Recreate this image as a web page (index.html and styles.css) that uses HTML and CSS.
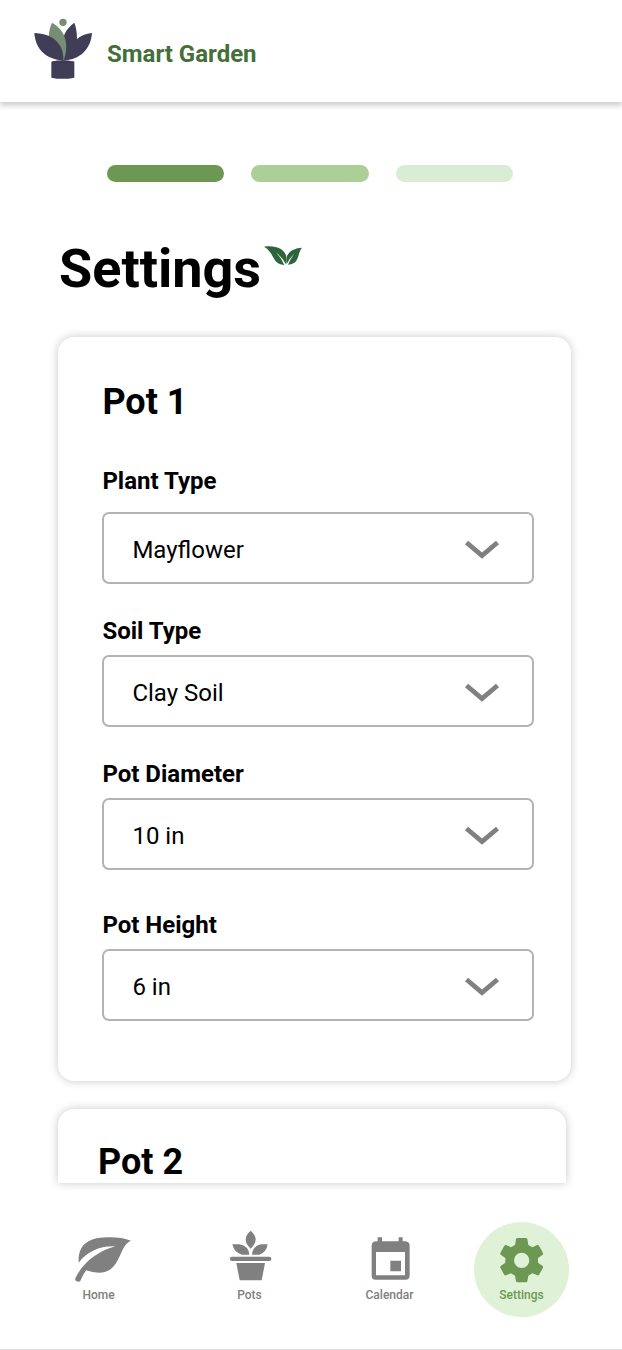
FILE: index.html
```html
<!DOCTYPE html>
<html lang="en">
<head>
<meta charset="utf-8">
<title>Smart Garden</title>
<link rel="stylesheet" href="styles.css">
</head>
<body>
<div class="app">
  <header class="header">
    <svg class="logo" viewBox="0 0 198 225" aria-hidden="true">
      <path class="logo-dark" d="M133 38C106 58 97 80 99 104V152C150 149 182 119 186 69Q158 72 141 87Q141 58 133 38Z"/>
      <path class="logo-green" d="M66 38C106 60 119 102 101 152L70 100L56 82Q57 56 66 38Z"/>
      <path class="logo-dark" d="M13 69C65 71 102 98 100 152C48 148 17 119 13 69Z"/>
      <circle class="logo-green" cx="99" cy="37" r="11"/>
      <path class="logo-dark" d="M64 155Q98 147 133 155V203Q98 210 64 203Z"/>
      <path class="logo-rim" d="M66 155Q98 162 131 155" />
    </svg>
    <span class="brand">Smart Garden</span>
  </header>

  <main class="main">
    <div class="steps"><i class="step step-done"></i><i class="step step-current"></i><i class="step step-next"></i></div>
    <div class="title-row">
      <h1 class="title">Settings</h1>
      <svg class="sprout" viewBox="0 0 114 60" aria-hidden="true">
        <path d="M0 2C36-4 68 10 67 38Q67 47 65 54Q55 34 37 20Q52 36 61 57C22 54 33 20 0 2Z"/>
        <path d="M114 5C83 7 65 23 67 45L68 55Q76 37 91 23Q79 39 72 56C108 55 99 22 114 5Z"/>
      </svg>
    </div>

    <div class="pots">
      <section class="card">
        <h2 class="card-title">Pot 1</h2>
        <div class="field field-first">
          <span class="label">Plant Type</span>
          <div class="select"><span>Mayflower</span><svg class="chevron" viewBox="0 0 34 20"><path d="M1.5 2.5L17 15.5L32.5 2.5"/></svg></div>
        </div>
        <div class="field">
          <span class="label">Soil Type</span>
          <div class="select"><span>Clay Soil</span><svg class="chevron" viewBox="0 0 34 20"><path d="M1.5 2.5L17 15.5L32.5 2.5"/></svg></div>
        </div>
        <div class="field">
          <span class="label">Pot Diameter</span>
          <div class="select"><span>10 in</span><svg class="chevron" viewBox="0 0 34 20"><path d="M1.5 2.5L17 15.5L32.5 2.5"/></svg></div>
        </div>
        <div class="field field-last">
          <span class="label">Pot Height</span>
          <div class="select"><span>6 in</span><svg class="chevron" viewBox="0 0 34 20"><path d="M1.5 2.5L17 15.5L32.5 2.5"/></svg></div>
        </div>
      </section>
      <section class="card card-cut"><h2 class="card-title">Pot 2</h2></section>
    </div>
  </main>

  <nav class="nav">
    <a class="tab tab-home">
      <svg class="tab-icon" viewBox="-12 0 168 144"><path d="M168 17C129 33 139 113 72 113Q52 113 34 106Q26 115 16 138Q12 142 5 139Q-1 136 1 130C25 79 71 48 121 34C76 32 37 49 11 83C9 39 28 8 98 7Q139 6 168 17Z"/></svg>
      <span>Home</span>
    </a>
    <a class="tab tab-pots">
      <svg class="tab-icon" viewBox="-2 0 168 144"><path d="M84-13Q114 13 84 41Q54 13 84-13ZM29 28H50Q78 33 80 59H58Q34 53 29 28ZM135 28H114Q90 33 88 59H110Q131 53 135 28Z"/><rect x="22" y="65" width="124" height="13" rx="6"/><path d="M41 84H127L117 136H51Z"/></svg>
      <span>Pots</span>
    </a>
    <a class="tab tab-calendar">
      <svg class="tab-icon" viewBox="-2 0 168 144"><path fill-rule="evenodd" d="M45 7H58V19H108V7H120V19H128Q141 20 141 32V123Q140 134 129 134H39Q27 134 27 123V32Q27 20 39 19H45ZM40 51V121H127V51ZM83 77H115V109H83Z"/></svg>
      <span>Calendar</span>
    </a>
    <a class="tab tab-settings">
      <svg class="tab-icon" viewBox="2 -1 168 144"><path fill-rule="evenodd" d="M68 11Q69 8 72 8H98Q101 8 102 11L105 29L117 36L132 29Q135 28 137 31L149 53Q150 56 148 58L134 68V82L148 92Q150 94 149 97L137 119Q135 121 132 120L117 114L105 121L102 138Q101 141 98 141H72Q69 141 68 138L65 121L53 114L38 120Q35 121 33 119L21 97Q20 94 22 92L36 82V68L22 58Q20 56 21 53L33 31Q35 28 38 29L53 36L65 29ZM85 52A23 23 0 1 0 85 98A23 23 0 1 0 85 52Z"/></svg>
      <span>Settings</span>
    </a>
  </nav>
</div>
</body>
</html>
```

FILE: styles.css
```css
* { box-sizing: border-box; }
body { margin: 0; background: #fff; color: #000; font-family: Roboto, "Liberation Sans", sans-serif; }
h1, h2 { margin: 0; font-weight: 700; }
svg { display: block; flex: none; overflow: visible; }

.app { display: flex; flex-direction: column; width: 622px; height: 1350px; overflow: hidden; border-bottom: 1px solid #e0e0e0; }

.header { display: flex; align-items: flex-start; flex: none; height: 101.5px; padding: 10px 0 0 30px; box-shadow: 0 4px 5px rgba(0, 0, 0, .18); }
.logo { width: 66px; height: 75px; }
.logo-dark { fill: #403d57; }
.logo-green { fill: #768e73; }
.logo-rim { fill: none; stroke: #38354c; stroke-width: 2; }
.brand { padding-top: 30px; margin-left: 11px; font-size: 24px; line-height: 28px; font-weight: 700; color: #446f3a; }

.main { flex: none; padding: 63.5px 51px 0 58px; }
.steps { display: flex; gap: 27px; padding-left: 48.7px; }
.step { width: 117.6px; height: 16.6px; border-radius: 9px; }
.step-done { background: #6d9854; }
.step-current { background: #accf97; }
.step-next { background: #d9edd4; }

.title-row { display: flex; align-items: flex-start; height: 64px; margin-top: 55.4px; padding-left: 1px; }
.title { font-size: 54px; line-height: 64px; }
.sprout { width: 38px; height: 20px; margin: 9px 0 0 3px; fill: #2d643c; }

.pots { display: flex; flex-direction: column; gap: 28px; margin-top: 36px; }
.card { height: 744.5px; padding: 44px 36.6px 0 44.4px; border-radius: 16px; box-shadow: 0 0 10px rgba(0, 0, 0, .22); }
.card-cut { width: 508px; height: 74px; padding: 32px 0 0 40px; border-radius: 16px 16px 0 0; }
.card-title { font-size: 36px; line-height: 42px; }
.field { margin-top: 33.5px; }
.field-first { margin-top: 44.5px; }
.field-last { margin-top: 41.5px; }
.label { display: block; height: 37.5px; font-size: 24px; line-height: 28px; font-weight: 700; }
.field-first .label { height: 44.1px; }
.select { display: flex; align-items: center; justify-content: space-between; height: 72px; padding: 5.5px 33px 0 28px; border: 2px solid #b3b3b3; border-radius: 7px; font-size: 24px; line-height: 28px; }
.chevron { width: 34px; height: 20px; fill: none; stroke: #808080; stroke-width: 4.8; }

.nav { display: flex; align-items: flex-start; margin-top: 39px; }
.tab { display: flex; flex: none; flex-direction: column; align-items: center; width: 95px; height: 95px; padding-top: 13px; font-size: 12px; line-height: 14px; font-weight: 500; color: #808080; }
.tab-icon { width: 56px; height: 48px; margin-bottom: 5px; fill: currentColor; }
.tab-home { margin-left: 51px; }
.tab-pots { margin-left: 56px; }
.tab-calendar { margin-left: 45px; }
.tab-settings { margin-left: 37px; border-radius: 50%; background: #dff1d6; color: #6d9854; }
```
